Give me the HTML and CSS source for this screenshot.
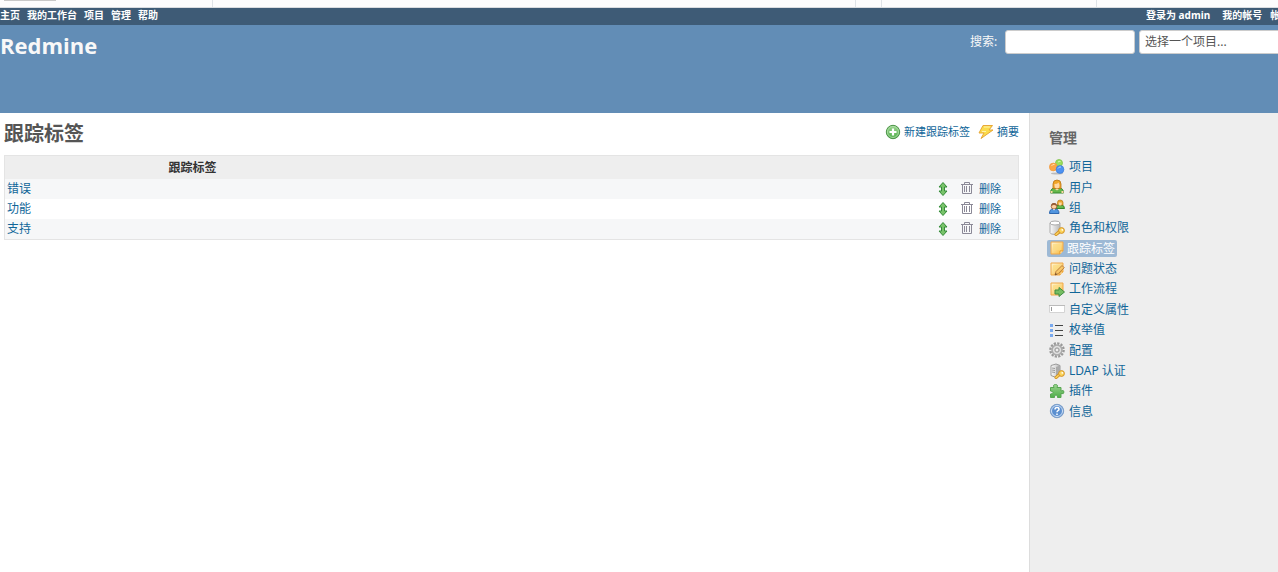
FILE: index.html
```
<!DOCTYPE html>
<html lang="zh-Hans">
<head>
    <meta charset="UTF-8">
    <meta name="viewport" content="width=device-width, initial-scale=1.0">
    <title>跟踪标签 - Redmine</title>
    <link rel="stylesheet" href="styles.css">
</head>
<body>
    <!-- icons used more than once, or layered on others -->
    <svg class="defs" aria-hidden="true">
        <defs>
            <linearGradient id="gold" x1="0" y1="0" x2="1" y2="1">
                <stop offset="0" stop-color="#fff8d8"/>
                <stop offset="1" stop-color="#f8b838"/>
            </linearGradient>
            <linearGradient id="silver" x1="0" y1="0" x2="1" y2="0">
                <stop offset="0" stop-color="#fcfcfc"/>
                <stop offset="1" stop-color="#b8b8b8"/>
            </linearGradient>
            <linearGradient id="green" x1="0" y1="0" x2="0" y2="1">
                <stop offset="0" stop-color="#9bd48f"/>
                <stop offset="1" stop-color="#4fae49"/>
            </linearGradient>
            <symbol id="note" viewBox="0 0 16 16">
                <path d="M2 2h12v9l-3 3H2z" fill="url(#gold)" stroke="#f0a848"/>
                <path d="M4 4h8v6H4z" fill="#fbdc80" opacity=".7"/>
                <path d="M14 11h-3v3" fill="#fff6d0" stroke="#e59a2f"/>
            </symbol>
            <symbol id="key" viewBox="0 0 16 16">
                <path d="M11 11l-4 3.500" stroke="#d29127" stroke-width="3" stroke-linecap="round"/>
                <path d="M11 11l-4 3.500" stroke="#fbd45c" stroke-width="1.500" stroke-linecap="round"/>
                <circle cx="12.500" cy="10.500" r="2.900" fill="#fbd45c" stroke="#d29127"/>
                <circle cx="13.300" cy="9.800" r=".9" fill="#fff"/>
            </symbol>
            <symbol id="sort" viewBox="0 0 16 16">
                <path d="M8 1.500l4 4.500H9.500v4H12l-4 4.500L4 10h2.500V6H4z" fill="#79c36a" stroke="#348c38" stroke-linejoin="round"/>
            </symbol>
            <symbol id="trash" viewBox="0 0 16 16">
                <path d="M2 3.500h12M5.500 3.500v-2h5v2M3.500 3.500v9h9v-9M5.500 5v6M7.500 5v6M10.500 5v6" fill="none" stroke="#8b8997"/>
            </symbol>
        </defs>
    </svg>

    <div class="tab-strip">
        <div class="tab"><span class="tab-mark"></span></div>
        <div class="tab"></div>
        <div class="tab"></div>
        <div class="tab"></div>
        <div></div>
    </div>

    <nav class="top-menu">
        <ul class="menu">
            <li><a href="#">主页</a></li>
            <li><a href="#">我的工作台</a></li>
            <li><a href="#">项目</a></li>
            <li><a href="#">管理</a></li>
            <li><a href="#">帮助</a></li>
        </ul>
        <div class="account">
            <span class="logged-as">登录为 <a href="#">admin</a></span>
            <a href="#">我的帐号</a>
            <a href="#">帐</a>
        </div>
    </nav>

    <header class="header">
        <h1>Redmine</h1>
        <form class="quick-search">
            <label for="q">搜索:</label>
            <input type="text" id="q" name="q">
            <select aria-label="选择一个项目">
                <option>选择一个项目...</option>
            </select>
        </form>
    </header>

    <div class="main">
        <main class="content">
            <div class="title-bar">
                <h2>跟踪标签</h2>
                <div class="contextual">
                    <a href="#">
                        <svg class="icon" viewBox="0 0 16 16">
                            <circle cx="8" cy="8" r="6.700" fill="url(#green)" stroke="#4c9448"/>
                            <circle cx="8" cy="8" r="5.500" fill="none" stroke="#b5dfae" stroke-width=".8"/>
                            <path d="M8 4.500v7M4.500 8h7" stroke="#fff" stroke-width="2.200"/>
                        </svg>新建跟踪标签</a>
                    <a href="#">
                        <svg class="icon" viewBox="0 0 16 16">
                            <path d="M5 1.500h9.500L11 6h4L3 14.500 6 9H1z" fill="#fbdc4c" stroke="#e8a838" stroke-linejoin="round"/>
                            <path d="M6 3h6M4 7.500h4" stroke="#fff3ae"/>
                        </svg>摘要</a>
                </div>
            </div>

            <table class="list">
                <thead>
                    <tr>
                        <th class="name">跟踪标签</th>
                        <th></th>
                        <th class="sort"></th>
                        <th class="buttons"></th>
                    </tr>
                </thead>
                <tbody>
                    <tr>
                        <td><a href="#">错误</a></td>
                        <td></td>
                        <td class="sort"><a href="#" aria-label="排序"><svg class="icon"><use href="#sort"/></svg></a></td>
                        <td class="buttons"><a href="#"><svg class="icon"><use href="#trash"/></svg>删除</a></td>
                    </tr>
                    <tr>
                        <td><a href="#">功能</a></td>
                        <td></td>
                        <td class="sort"><a href="#" aria-label="排序"><svg class="icon"><use href="#sort"/></svg></a></td>
                        <td class="buttons"><a href="#"><svg class="icon"><use href="#trash"/></svg>删除</a></td>
                    </tr>
                    <tr>
                        <td><a href="#">支持</a></td>
                        <td></td>
                        <td class="sort"><a href="#" aria-label="排序"><svg class="icon"><use href="#sort"/></svg></a></td>
                        <td class="buttons"><a href="#"><svg class="icon"><use href="#trash"/></svg>删除</a></td>
                    </tr>
                </tbody>
            </table>
        </main>

        <aside class="sidebar">
            <h3>管理</h3>
            <ul class="admin-menu">
                <li><a href="#">
                    <svg class="icon" viewBox="0 0 16 16">
                        <ellipse cx="8" cy="14.500" rx="6" ry="1" fill="#bbb"/>
                        <circle cx="10" cy="4" r="3.500" fill="#9ade5c" stroke="#78bd42" stroke-width=".7"/>
                        <circle cx="4.300" cy="8" r="3.900" fill="#fba546" stroke="#f09b41" stroke-width=".7"/>
                        <circle cx="11" cy="10.500" r="3.900" fill="#4d92f2" stroke="#397bd8" stroke-width=".7"/>
                        <path d="M2.500 7q1-2 3-1.500M9 9.500q1-2 3-1.500M9 3q1-1 2.500-.5" fill="none" stroke="#fff" opacity=".6"/>
                    </svg>项目</a></li>
                <li><a href="#">
                    <svg class="icon" viewBox="0 0 16 16">
                        <path d="M1.500 14q0-5 4.500-5h4q4.500 0 4.500 5z" fill="#64b84c" stroke="#37872f"/>
                        <path d="M4 9.500V5q0-4 4-4t4 4v4.500z" fill="#f0a528" stroke="#b97517" stroke-width=".8"/>
                        <path d="M5.500 5q3 0 4-1.500l1 2.500q0 3.500-2.500 3.500T5.500 6z" fill="#ffd7a4"/>
                        <path d="M6 10l2 1.500 2-1.500" fill="#ffd7a4"/>
                        <path d="M1.500 12h2v2h-2zM12.500 12h2v2h-2z" fill="#ffd7a4"/>
                    </svg>用户</a></li>
                <li><a href="#">
                    <svg class="icon" viewBox="0 0 16 16">
                        <path d="M7 9q0-3 3.500-3h1.500q3.500 0 3.500 3.500H7z" fill="#64b84c" stroke="#37872f"/>
                        <path d="M8.500 6V3.500Q8.500 1 11.200 1T14 3.500V6z" fill="#eba72f" stroke="#b97517" stroke-width=".7"/>
                        <path d="M9.700 3.500h3V5q0 1.500-1.500 1.500T9.700 5z" fill="#ffd7a4"/>
                        <path d="M.5 14.500Q.5 10 4 10h2q4 0 4 4.500z" fill="#5195df" stroke="#2f68af"/>
                        <circle cx="5" cy="7.300" r="2.800" fill="#ffd0a0" stroke="#92542d" stroke-width=".8"/>
                        <path d="M2.200 7q0-3 2.800-3t2.800 3L5 5.800z" fill="#955a34"/>
                        <path d="M4 10l1 1.500L6 10" fill="#fff"/>
                    </svg>组</a></li>
                <li><a href="#">
                    <svg class="icon" viewBox="0 0 16 16">
                        <path d="M1 3v9.500q0 2 5 2t5-2V3z" fill="url(#silver)" stroke="#aaa"/>
                        <ellipse cx="6" cy="3" rx="5" ry="2" fill="#fff" stroke="#aaa"/>
                        <use href="#key"/>
                    </svg>角色和权限</a></li>
                <li><a href="#" class="selected">
                    <svg class="icon"><use href="#note"/></svg>跟踪标签</a></li>
                <li><a href="#">
                    <svg class="icon" viewBox="0 0 16 16">
                        <use href="#note"/>
                        <path d="M6 14l1-3.500 6-6 2.200 2.200-6 6z" fill="#f8c869" stroke="#b97c3c"/>
                        <path d="M6 14l.7-2 1.300 1.300z" fill="#5c4128"/>
                    </svg>问题状态</a></li>
                <li><a href="#">
                    <svg class="icon" viewBox="0 0 16 16">
                        <use href="#note"/>
                        <path d="M6 9h4V6.500l5.500 4.500-5.500 4.500V13H6z" fill="#76bd62" stroke="#3f8d42" stroke-linejoin="round"/>
                    </svg>工作流程</a></li>
                <li><a href="#">
                    <svg class="icon" viewBox="0 0 16 16">
                        <path d="M.5 4.500h15v7H.5z" fill="#fff" stroke="#d4d4d4"/>
                        <path d="M0 4.500h16" stroke="#bbb"/>
                        <path d="M2.500 6v4" stroke="#999"/>
                    </svg>自定义属性</a></li>
                <li><a href="#">
                    <svg class="icon" viewBox="0 0 16 16">
                        <path d="M1 2h3v3H1zM1 7h3v3H1zM1 12h3v3H1z" fill="#79a9ee"/>
                        <path d="M6 3.500h8M6 8.500h8M6 13.500h8" stroke="#444"/>
                    </svg>枚举值</a></li>
                <li><a href="#">
                    <svg class="icon" viewBox="0 0 16 16">
                        <circle cx="8" cy="8" r="6.600" fill="none" stroke="#999" stroke-width="2.400" stroke-dasharray="2.200 1.256"/>
                        <circle cx="8" cy="8" r="5" fill="#ccc" stroke="#aaa" stroke-width="1.500"/>
                        <circle cx="8" cy="8" r="3.500" fill="none" stroke="#e4e4e4"/>
                        <circle cx="8" cy="8" r="2" fill="#eee" stroke="#999"/>
                    </svg>配置</a></li>
                <li><a href="#">
                    <svg class="icon" viewBox="0 0 16 16">
                        <path d="M2 2.500l5-1.500 4 1.500v9.500l-4 2.500-5-2z" fill="url(#silver)" stroke="#999"/>
                        <path d="M7 4v10.500l4-2.500V2.500z" fill="#aaa"/>
                        <path d="M3 5l3 .5M3 7l3 .5M3 9l3 .5" stroke="#999"/>
                        <use href="#key"/>
                    </svg>LDAP 认证</a></li>
                <li><a href="#">
                    <svg class="icon" viewBox="0 0 16 16">
                        <path d="M1.500 4.500H5Q3.500 1.500 6.500 1.500T8 4.500h4v3.500q3-1.500 3 1t-3 1.500v4H8.500q.5-2.500-1.500-2.500t-1.500 2.500h-4v-3.500q2.500 0 2.500-1.500T1.500 8z" fill="url(#green)" stroke="#58a652"/>
                    </svg>插件</a></li>
                <li><a href="#">
                    <svg class="icon" viewBox="0 0 16 16">
                        <circle cx="8" cy="8" r="6.700" fill="#5b8fd0" stroke="#7d9fc8"/>
                        <circle cx="8" cy="8" r="5.500" fill="none" stroke="#d3e2f5"/>
                        <path d="M6 6.500q0-2 2-2t2 1.700q0 1-1 1.500t-1 1.500M8 10.500v1.500" fill="none" stroke="#fff" stroke-width="1.500"/>
                    </svg>信息</a></li>
            </ul>
        </aside>
    </div>
</body>
</html>
```

FILE: styles.css
```
* {
    box-sizing: border-box;
}

body {
    margin: 0;
    min-height: 100vh;
    display: flex;
    flex-direction: column;
    font-family: "Noto Sans", "Noto Sans CJK SC", sans-serif;
    font-size: 12px;
    line-height: 20px;
    color: #333;
    background-color: #fff;
}

h1, h2, h3, ul {
    margin: 0;
    padding: 0;
}

ul {
    list-style: none;
}

a {
    color: #169;
    text-decoration: none;
}

a:hover {
    color: #c61a1a;
    text-decoration: underline;
}

.defs {
    position: absolute;
    width: 0;
    height: 0;
}

.icon {
    width: 16px;
    height: 16px;
    flex: none;
}

/* strip above the page */
.tab-strip {
    display: grid;
    grid-template-columns: 213px 1fr 26px 215px 181px;
    height: 8px;
    border-bottom: 1px solid #d9dce0;
    background-color: #fcfcfd;
}

.tab {
    border-right: 1px solid #dfe3e8;
}

.tab-mark {
    display: block;
    width: 52px;
    height: 1px;
    margin-left: 4px;
    background-color: #c8c8c8;
}

.top-menu {
    display: flex;
    justify-content: space-between;
    height: 17px;
    line-height: 14px;
    font-size: 10px;
    font-weight: bold;
    color: #fff;
    background-color: #3e5b76;
}

.top-menu a {
    color: #fff;
}

.menu {
    display: flex;
    gap: 7px;
}

/* the last link runs past the window edge */
.account {
    display: flex;
    gap: 8px;
    width: 132px;
    overflow: hidden;
    white-space: nowrap;
}

.account a {
    flex: none;
}

.logged-as {
    flex: none;
    margin-right: 4px;
}

.header {
    display: flex;
    justify-content: space-between;
    min-height: 88px;
    color: #f8f8f8;
    background-color: #628db6;
}

.header h1 {
    padding-top: 4px;
    font-family: "Open Sans", sans-serif;
    font-size: 22px;
    font-weight: bold;
    line-height: 32px;
}

.quick-search {
    display: flex;
    align-items: flex-start;
    gap: 4px;
    width: 308px;
    padding-top: 5px;
    overflow: hidden;
}

.quick-search label {
    flex: none;
    width: 31px;
    line-height: 24px;
    white-space: nowrap;
}

.quick-search input,
.quick-search select {
    flex: none;
    width: 130px;
    height: 24px;
    padding: 0 5px;
    border: 1px solid #ccc;
    border-radius: 3px;
    font: inherit;
    color: #555;
    background-color: #fff;
    appearance: none;
}

.quick-search select {
    width: 170px;
}

.main {
    display: flex;
    flex: 1;
}

.content {
    flex: 1;
    padding: 8px 10px 10px 4px;
}

.title-bar {
    display: flex;
    justify-content: space-between;
    margin-bottom: 8px;
}

.title-bar h2 {
    font-size: 20px;
    line-height: 26px;
    color: #555;
}

.contextual {
    display: flex;
    gap: 8px;
    font-size: 11px;
    line-height: 22px;
}

.contextual a {
    display: flex;
    align-items: center;
    gap: 3px;
    height: 22px;
}

.list {
    width: 100%;
    border: 1px solid #e4e4e4;
    border-collapse: separate;
    border-spacing: 0;
    table-layout: fixed;
}

.list th {
    height: 23px;
    padding: 0;
    background-color: #eee;
}

.list td {
    height: 20px;
    padding: 0 2px;
    line-height: 18px;
}

.list tbody tr:nth-child(odd) {
    background-color: #f6f7f8;
}

.list .name {
    width: 37%;
}

.list .sort {
    width: 26px;
}

.list .buttons {
    width: 59px;
    padding: 0;
    font-size: 11px;
}

.list td a {
    display: flex;
    align-items: center;
}

.list .buttons a {
    gap: 4px;
}

.sidebar {
    width: 249px;
    padding: 15px 10px 10px 19px;
    border-left: 1px solid #ddd;
    background-color: #eee;
}

.sidebar h3 {
    margin-bottom: 10px;
    font-size: 14px;
    line-height: 20px;
    color: #666;
}

.admin-menu {
    display: grid;
    grid-auto-rows: 1fr;
    align-items: center;
    min-height: 265px;
}

.admin-menu a {
    display: inline-flex;
    align-items: center;
    gap: 4px;
    vertical-align: top;
    line-height: 17px;
}

.admin-menu .selected {
    gap: 2px;
    margin-left: -2px;
    padding: 0 2px;
    border-radius: 2px;
    color: #fff;
    background-color: #9db9d5;
}
```
